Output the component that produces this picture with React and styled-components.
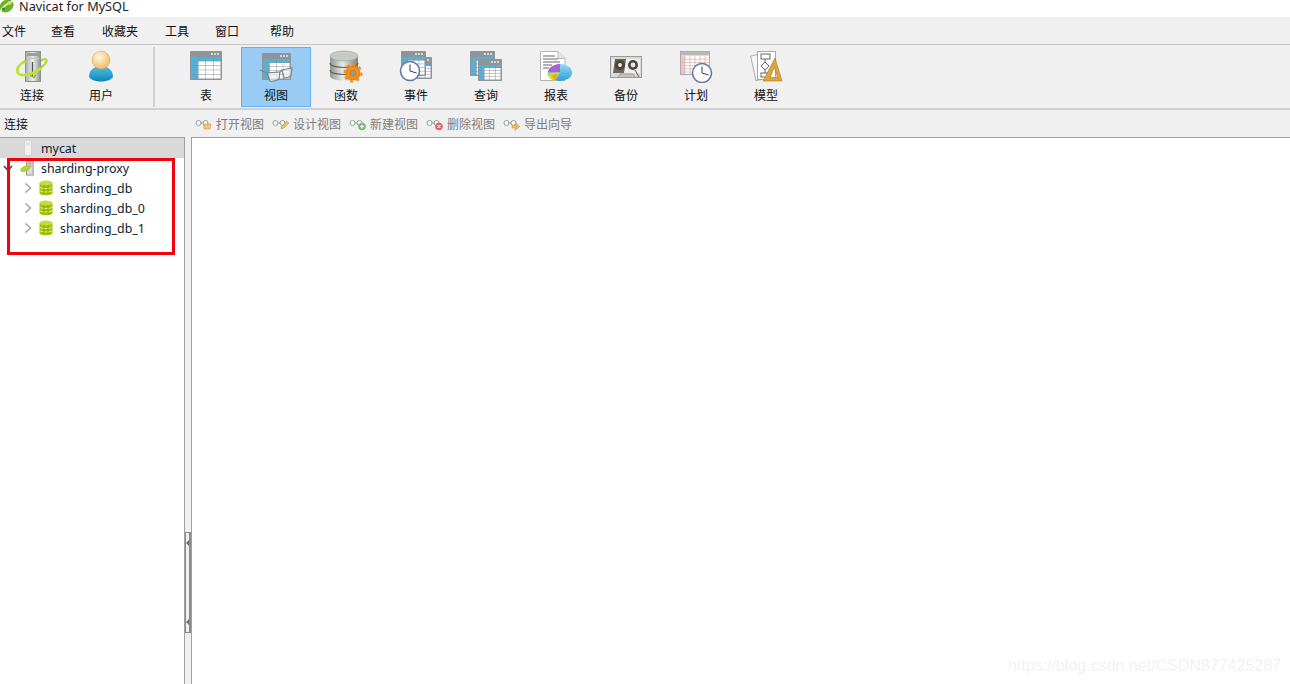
import React from 'react';
import styled, { createGlobalStyle } from 'styled-components';

const GlobalStyle = createGlobalStyle`
  html, body {
    margin: 0;
    padding: 0;
    background: #fff;
    overflow: hidden;
  }
  body {
    font-family: "Liberation Sans", "Noto Sans CJK SC", sans-serif;
  }
`;

const Page = styled.div`
  width: 1290px;
  height: 684px;
  display: flex;
  flex-direction: column;
  overflow: hidden;
  position: relative;
`;

const TitleBar = styled.div`
  height: 17px;
  display: flex;
  align-items: flex-start;
  gap: 5px;
  background: #fff;
  color: #222;
  font-family: "Noto Sans", sans-serif;
  font-size: 12.7px;
  line-height: 12px;
  overflow: hidden;
  flex: none;
`;

const MenuBar = styled.div`
  height: 28px;
  box-sizing: border-box;
  display: flex;
  align-items: center;
  background: #f0f0f0;
  border-bottom: 1px solid #c4c4c4;
  flex: none;
  font-size: 12px;
  color: #111;
`;

const MenuItem = styled.span`
  width: ${p => p.$w}px;
  padding-left: 2px;
  box-sizing: border-box;
  flex: none;
`;

const ToolBar = styled.div`
  height: 65px;
  box-sizing: border-box;
  display: flex;
  align-items: flex-start;
  padding-top: 2px;
  background: #f0f0f0;
  border-bottom: 2px solid #cfcfcf;
  flex: none;
`;

const ToolButton = styled.div`
  width: ${p => p.$w || 70}px;
  height: 60px;
  box-sizing: border-box;
  flex: none;
  display: flex;
  flex-direction: column;
  align-items: center;
  justify-content: flex-start;
  padding-top: 2px;
  gap: 3px;
  font-size: 12px;
  color: #111;
  background: ${p => (p.$active ? '#99ccf5' : 'transparent')};
  border: 1px solid ${p => (p.$active ? '#62b1f6' : 'transparent')};
`;

const ToolSep = styled.div`
  width: 2px;
  height: 60px;
  background: #d0d0d0;
  margin: 0 16px 0 15px;
  flex: none;
`;

const SubBar = styled.div`
  height: 27px;
  display: flex;
  align-items: center;
  background: #f0f0f0;
  flex: none;
`;

const SubTitle = styled.div`
  width: 195px;
  padding-left: 4px;
  box-sizing: border-box;
  font-size: 12px;
  color: #111;
  flex: none;
`;

const SubAction = styled.div`
  display: flex;
  align-items: center;
  gap: 3px;
  margin-right: 8px;
  font-size: 12px;
  color: #7d7d7d;
`;

const Body = styled.div`
  flex: 1;
  display: flex;
  min-height: 0;
  background: #f0f0f0;
`;

const Tree = styled.div`
  width: 185px;
  box-sizing: border-box;
  background: #fff;
  border-top: 1px solid #a0a0a0;
  border-right: 1px solid #a0a0a0;
  flex: none;
  position: relative;
`;

const Row = styled.div`
  height: 20px;
  display: flex;
  align-items: center;
  padding-left: ${p => p.$indent}px;
  background: ${p => (p.$selected ? '#d9d9d9' : 'transparent')};
  font-family: "Noto Sans", sans-serif;
  font-size: 12.4px;
  color: #0c2230;
`;

const Arrow = styled.span`
  width: ${p => p.$w}px;
  height: 14px;
  flex: none;
  display: flex;
  align-items: center;
  justify-content: flex-start;
`;

const RowIcon = styled.span`
  width: 16px;
  height: 16px;
  flex: none;
  margin-right: ${p => p.$gap}px;
  display: flex;
  align-items: center;
  justify-content: center;
`;

const Callout = styled.div`
  position: absolute;
  left: 7px;
  top: 20px;
  width: 168px;
  height: 97px;
  box-sizing: border-box;
  border: 3px solid #f5000a;
  pointer-events: none;
`;

const Splitter = styled.div`
  width: 6px;
  flex: none;
  background: #f0f0f0;
  position: relative;
`;

const Grip = styled.div`
  position: absolute;
  left: 0;
  top: 395px;
  width: 6px;
  height: 101px;
  box-sizing: border-box;
  background: #f0f0f0;
  border: 1px solid #8a8a8a;
  border-right-width: 2px;
  display: flex;
  flex-direction: column;
  justify-content: space-between;
  padding: 7px 0;
`;

const GripArrow = styled.i`
  display: block;
  width: 0;
  height: 0;
  border-top: 3px solid transparent;
  border-bottom: 3px solid transparent;
  border-right: 3px solid #707070;
`;

const Content = styled.div`
  flex: 1;
  background: #fff;
  border-top: 1px solid #a0a0a0;
  border-left: 1px solid #a0a0a0;
`;

const Watermark = styled.div`
  position: absolute;
  right: 9px;
  bottom: 9px;
  font-size: 16px;
  color: #f2f2f2;
`;

const Leaf = () => (
  <svg width="14" height="14" viewBox="0 0 14 14">
    <ellipse cx="6.5" cy="6" rx="7.5" ry="6" fill="#6fb12c" transform="rotate(-35 6.5 6)" />
    <path d="M0.5 11 C4 5 8 3 13 1" stroke="#eef8d4" strokeWidth="1.5" fill="none" />
    <circle cx="9.5" cy="3" r="2" fill="#c9e36b" />
    <circle cx="3.5" cy="9" r="1.6" fill="#3f8a1c" />
  </svg>
);

const ServerIcon = () => (
  <svg width="32" height="33" viewBox="0 0 32 33">
    <defs>
      <linearGradient id="tower" x1="0" y1="0" x2="1" y2="0">
        <stop offset="0" stopColor="#aeb0ac" />
        <stop offset="0.5" stopColor="#eceee9" />
        <stop offset="1" stopColor="#8f918d" />
      </linearGradient>
    </defs>
    <path d="M24 11 C29 8 31 9 30.5 11.5 C30 14 27 16 24 18" fill="none" stroke="#b7d82c" strokeWidth="2.2" />
    <rect x="9.5" y="1.5" width="15" height="30" fill="url(#tower)" stroke="#8e8e8e" />
    <rect x="11" y="3" width="12" height="3" fill="#9b9d9a" />
    <rect x="11" y="7.5" width="12" height="1.5" fill="#c4c4c0" />
    <path d="M16.5 12v14" stroke="#555" strokeWidth="1.3" />
    <path d="M9.5 11 C3 14 0 19 2 23 C5 27 17 25 25 18" fill="none" stroke="#c2e12d" strokeWidth="2.8" />
    <path d="M14 25.5l4 2 2-3" fill="none" stroke="#8aa81c" strokeWidth="1.2" />
  </svg>
);

const UserIcon = () => (
  <svg width="32" height="33" viewBox="0 0 32 33">
    <defs>
      <radialGradient id="face" cx="40%" cy="35%" r="70%">
        <stop offset="0" stopColor="#fff8e2" />
        <stop offset="1" stopColor="#f2b65e" />
      </radialGradient>
      <linearGradient id="torso" x1="0" y1="0" x2="0" y2="1">
        <stop offset="0" stopColor="#5fb4d8" />
        <stop offset="0.55" stopColor="#2aa7d2" />
        <stop offset="1" stopColor="#0e7fb4" />
      </linearGradient>
    </defs>
    <path d="M4 27 C4 20 9 16 16 16 C23 16 28 20 28 27 C24 33 8 33 4 27Z" fill="url(#torso)" />
    <circle cx="16" cy="10" r="9" fill="url(#face)" stroke="#d7a868" strokeWidth="0.6" />
  </svg>
);

const GridBase = ({ x = 0, y = 0, w = 32, h = 29 }) => {
  const colW = (w - 2) / 4;
  const rowH = (h - 7) / 5;
  const cells = [];
  for (let r = 0; r < 5; r++) {
    for (let c = 0; c < 4; c++) {
      const head = r === 0 || c === 0;
      cells.push(
        <rect
          key={`${r}-${c}`}
          x={x + 1 + c * colW}
          y={y + 6 + r * rowH}
          width={colW - 0.5}
          height={rowH - 0.5}
          fill={head ? '#4fb4dc' : '#fff'}
        />
      );
    }
  }
  return (
    <g>
      <rect x={x} y={y} width={w} height={h} fill="#8e9499" rx="1" />
      <rect x={x + w - 11} y={y + 2} width="2" height="2" fill="#d5d5d5" />
      <rect x={x + w - 8} y={y + 2} width="2" height="2" fill="#d5d5d5" />
      <rect x={x + w - 5} y={y + 2} width="2" height="2" fill="#d5d5d5" />
      {cells}
    </g>
  );
};

const TableIcon = () => (
  <svg width="36" height="33" viewBox="0 0 36 33">
    <GridBase x={2} y={1} />
  </svg>
);

const ViewIcon = () => (
  <svg width="36" height="33" viewBox="0 0 36 33">
    <GridBase x={4} y={3} w={29} h={27} />
    <g fill="#e8eef0" fillOpacity="0.7" stroke="#7c8488" strokeWidth="1.2">
      <path d="M2 20 L9 23" fill="none" />
      <path d="M9 23 L22 22 L21 29 Q17 32 12 31Z" />
      <path d="M22 22 L24 20" fill="none" />
      <path d="M24 20 L34 18 L33 26 Q30 28 26 28Z" />
    </g>
  </svg>
);

const FunctionIcon = () => (
  <svg width="36" height="33" viewBox="0 0 36 33">
    <defs>
      <linearGradient id="cyl" x1="0" y1="0" x2="1" y2="0">
        <stop offset="0" stopColor="#8f948f" />
        <stop offset="0.45" stopColor="#e6eae5" />
        <stop offset="1" stopColor="#7b807b" />
      </linearGradient>
      <radialGradient id="gear" cx="50%" cy="50%" r="50%">
        <stop offset="0.4" stopColor="#f9a21e" />
        <stop offset="1" stopColor="#f07a0a" />
      </radialGradient>
    </defs>
    <path d="M2 6 V26 C2 32 30 32 30 26 V6Z" fill="url(#cyl)" />
    <ellipse cx="16" cy="6" rx="14" ry="5" fill="#c4cac4" stroke="#9aa09a" strokeWidth="0.6" />
    <path d="M2 13 C2 19 30 19 30 13 M2 20 C2 26 30 26 30 20" stroke="#5f645f" strokeWidth="1.2" fill="none" />
    <circle cx="25" cy="23" r="7.5" fill="url(#gear)" />
    <circle cx="25" cy="23" r="8.5" fill="none" stroke="#f08a10" strokeWidth="2" strokeDasharray="3 3.6" />
    <circle cx="25" cy="23" r="3.2" fill="#9a9c90" stroke="#c9701a" strokeWidth="0.8" />
  </svg>
);

const Clock = ({ x, y, r = 8 }) => (
  <g>
    <circle cx={x} cy={y} r={r} fill="#fff" stroke="#6478a8" strokeWidth="1.6" />
    <path d={`M${x} ${y - r + 3} V${y} L${x + r - 3} ${y + 2}`} fill="none" stroke="#2f3a50" strokeWidth="1" />
  </g>
);

const EventIcon = () => (
  <svg width="36" height="33" viewBox="0 0 36 33">
    <GridBase x={10} y={7} w={24} h={22} />
    <GridBase x={3} y={1} w={25} h={25} />
    <Clock x={12} y={21} r={9.5} />
  </svg>
);

const QueryIcon = () => (
  <svg width="36" height="33" viewBox="0 0 36 33">
    <GridBase x={2} y={1} w={25} h={25} />
    <GridBase x={10} y={9} w={24} h={22} />
  </svg>
);

const ReportIcon = () => (
  <svg width="36" height="33" viewBox="0 0 36 33">
    <defs>
      <linearGradient id="pieBlue" x1="0" y1="0" x2="0" y2="1">
        <stop offset="0" stopColor="#8edcf6" />
        <stop offset="1" stopColor="#2f9fdc" />
      </linearGradient>
    </defs>
    <path d="M2.5 1.5 H20 L27 8.5 V30.5 H2.5Z" fill="#fff" stroke="#b5b5b5" />
    <path d="M20 1.5 V8.5 H27" fill="#e8e8e8" stroke="#b5b5b5" />
    <path d="M5 6h12M5 9h15M5 12h17M5 15h9M5 18h6" stroke="#666" strokeWidth="1" />
    <ellipse cx="22" cy="22.5" rx="12" ry="8.5" fill="url(#pieBlue)" />
    <path d="M10 22 C11 17 16 14.5 22 14 V22Z" fill="#b05fd0" />
    <path d="M9 23 L22 22.5 L17 31 C13 30 10 27 9 23Z" fill="#d9d62c" />
    <path d="M14 25 L20 24 L17 31Z" fill="#f0a02a" />
  </svg>
);

const TapeIcon = () => (
  <svg width="36" height="33" viewBox="0 0 36 33">
    <rect x="2.5" y="6.5" width="31" height="21" fill="#dadada" stroke="#9a9a9a" />
    <rect x="4" y="9" width="28" height="14" fill="#efefef" />
    <path d="M7 9 H18 L16 23 H5Z" fill="#6b645a" />
    <circle cx="12" cy="15" r="5" fill="#4a453e" />
    <circle cx="12" cy="15" r="2" fill="#e8e8e8" />
    <circle cx="25" cy="15" r="5" fill="#4a453e" />
    <circle cx="25" cy="15" r="2.4" fill="#e8e8e8" />
    <path d="M27 20 L31 27" stroke="#555" strokeWidth="1" />
    <path d="M10 27 L12 24 H25 L27 27" fill="#c4c4c4" stroke="#888" strokeWidth="0.7" />
  </svg>
);

const ScheduleIcon = () => {
  const lines = [];
  for (let i = 1; i < 6; i++) {
    lines.push(<path key={`v${i}`} d={`M${2 + i * 5} 6V24`} stroke="#dcb4b4" strokeWidth="0.8" />);
    lines.push(<path key={`h${i}`} d={`M2 ${6 + i * 3.2}H32`} stroke="#dcb4b4" strokeWidth="0.8" />);
  }
  return (
    <svg width="36" height="33" viewBox="0 0 36 33">
      <rect x="2.5" y="1.5" width="29" height="23" fill="#fff" stroke="#a6a6a6" />
      <rect x="2.5" y="1.5" width="29" height="4" fill="#b8b8b8" />
      <rect x="3" y="6" width="4" height="18" fill="#f4c8c8" />
      {lines}
      <Clock x={24} y={23} r={9.5} />
    </svg>
  );
};

const ModelIcon = () => (
  <svg width="36" height="33" viewBox="0 0 36 33">
    <rect x="5" y="4" width="18" height="25" fill="#f6f6f6" stroke="#b0b0b0" transform="rotate(-12 14 16)" />
    <rect x="9.5" y="1.5" width="18" height="28" fill="#fff" stroke="#a8a8a8" />
    <rect x="13" y="4" width="9" height="5" fill="none" stroke="#666" />
    <path d="M17 9v3 M17 12l4 4-4 4-4-4Z M17 20v3" fill="none" stroke="#666" />
    <rect x="13" y="23" width="9" height="4" fill="none" stroke="#666" />
    <path d="M27 8 L34 31 H15Z M26.5 17 L22 27.5 H29.5Z" fill="#e0a53c" fillRule="evenodd" stroke="#a87320" strokeWidth="0.6" />
  </svg>
);

const SmallGlasses = ({ badge }) => (
  <svg width="18" height="14" viewBox="0 0 18 14">
    <circle cx="3.5" cy="6" r="2.5" fill="#fff" stroke="#8d9a9c" />
    <circle cx="10.5" cy="6" r="2.5" fill="#fff" stroke="#8d9a9c" />
    <path d="M6 6h2" stroke="#8d9a9c" />
    {badge === 'open' && <path d="M9 7h7l-1 5H9Z" fill="#edc67c" stroke="#c89a4a" strokeWidth="0.6" />}
    {badge === 'edit' && <path d="M9 12l1-3 5-5 2 2-5 5Z" fill="#e9c46e" stroke="#b98f3f" strokeWidth="0.5" />}
    {badge === 'add' && (
      <g>
        <circle cx="13" cy="9.5" r="3.8" fill="#6fbd6f" />
        <path d="M11 9.5h4M13 7.5v4" stroke="#fff" strokeWidth="1.2" />
      </g>
    )}
    {badge === 'del' && (
      <g>
        <circle cx="13" cy="9.5" r="3.8" fill="#d96a6a" />
        <path d="M11.5 8l3 3M14.5 8l-3 3" stroke="#fff" strokeWidth="1" />
      </g>
    )}
    {badge === 'export' && <path d="M9 8h3V5.5L17 9.5l-5 4V11H9Z" fill="#eeb45e" stroke="#cf9236" strokeWidth="0.5" />}
  </svg>
);

const Chevron = ({ open }) => (
  <svg width="10" height="10" viewBox="0 0 10 10">
    <path
      d={open ? 'M1 3 L5 7.5 L9 3' : 'M2.5 0.5 L7.5 5 L2.5 9.5'}
      fill="none"
      stroke={open ? '#4a4a4a' : '#a8a8a8'}
      strokeWidth="1.6"
    />
  </svg>
);

const DbIcon = () => (
  <svg width="14" height="16" viewBox="0 0 14 16">
    <path d="M0.5 3 V13 C0.5 16 13.5 16 13.5 13 V3Z" fill="#a4c400" />
    <ellipse cx="7" cy="3" rx="6.5" ry="2.6" fill="#c6dc3a" />
    <path d="M0.5 7 c2 2 11 2 13 0 M0.5 10.5 c2 2 11 2 13 0" stroke="#eef5b8" strokeWidth="0.8" fill="none" />
    <path d="M5 5v9M9 5v9" stroke="#7f9a00" strokeWidth="0.7" />
  </svg>
);

const ConnIdleIcon = () => (
  <svg width="10" height="16" viewBox="0 0 10 16">
    <rect x="1.5" y="0.5" width="7" height="15" fill="#f2f2f2" stroke="#d2d2d2" />
    <path d="M3 3h4M3 5h4" stroke="#d2d2d2" />
  </svg>
);

const ConnOpenIcon = () => (
  <svg width="17" height="16" viewBox="0 0 17 16">
    <rect x="7" y="0.5" width="7" height="15" fill="#dcdcdc" stroke="#8e8e8e" />
    <path d="M9 3h3" stroke="#777" />
    <path d="M1 9 C3 6 8 5 12 5 C11 9 7 12 3 12 C1 12 0.5 10.5 1 9Z" fill="#b9d62e" stroke="#8eaa18" strokeWidth="0.5" />
  </svg>
);

const menus = [
  ['文件', 49],
  ['查看', 51],
  ['收藏夹', 63],
  ['工具', 50],
  ['窗口', 55],
  ['帮助', 40],
];

const tools = [
  ['表', TableIcon],
  ['视图', ViewIcon, true],
  ['函数', FunctionIcon],
  ['事件', EventIcon],
  ['查询', QueryIcon],
  ['报表', ReportIcon],
  ['备份', TapeIcon],
  ['计划', ScheduleIcon],
  ['模型', ModelIcon],
];

const actions = [
  ['打开视图', 'open'],
  ['设计视图', 'edit'],
  ['新建视图', 'add'],
  ['删除视图', 'del'],
  ['导出向导', 'export'],
];

const databases = ['sharding_db', 'sharding_db_0', 'sharding_db_1'];

export default function App() {
  return (
    <Page>
      <GlobalStyle />
      <TitleBar>
        <Leaf />
        <span>Navicat for MySQL</span>
      </TitleBar>
      <MenuBar>
        {menus.map(([label, w]) => (
          <MenuItem key={label} $w={w}>{label}</MenuItem>
        ))}
      </MenuBar>
      <ToolBar>
        <ToolButton $w={64}><ServerIcon />连接</ToolButton>
        <ToolButton $w={74}><UserIcon />用户</ToolButton>
        <ToolSep />
        {tools.map(([label, Icon, active]) => (
          <ToolButton key={label} $active={active}><Icon />{label}</ToolButton>
        ))}
      </ToolBar>
      <SubBar>
        <SubTitle>连接</SubTitle>
        {actions.map(([label, badge]) => (
          <SubAction key={label}>
            <SmallGlasses badge={badge} />
            {label}
          </SubAction>
        ))}
      </SubBar>
      <Body>
        <Tree>
          <Row $indent={20} $selected>
            <RowIcon $gap={5}><ConnIdleIcon /></RowIcon>
            mycat
          </Row>
          <Row $indent={3}>
            <Arrow $w={17}><Chevron open /></Arrow>
            <RowIcon $gap={5}><ConnOpenIcon /></RowIcon>
            sharding-proxy
          </Row>
          {databases.map(name => (
            <Row key={name} $indent={23}>
              <Arrow $w={15}><Chevron /></Arrow>
              <RowIcon $gap={6}><DbIcon /></RowIcon>
              {name}
            </Row>
          ))}
          <Callout />
        </Tree>
        <Splitter>
          <Grip>
            <GripArrow />
            <GripArrow />
          </Grip>
        </Splitter>
        <Content />
      </Body>
      <Watermark>https://blog.csdn.net/CSDN877425287</Watermark>
    </Page>
  );
}
